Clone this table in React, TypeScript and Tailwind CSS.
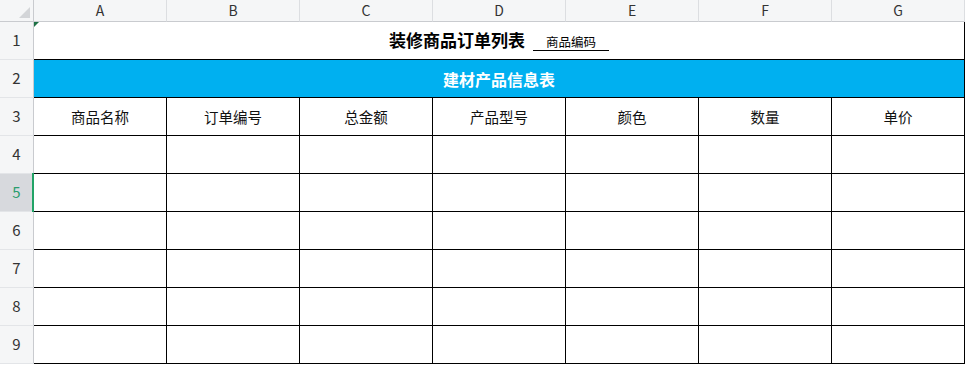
import React from "react";

const cols = ["A", "B", "C", "D", "E", "F", "G"];
const heads = ["商品名称", "订单编号", "总金额", "产品型号", "颜色", "数量", "单价"];
const font = { fontFamily: '"Noto Sans CJK SC", "Noto Sans", sans-serif' };

function RowHead({ n, selected }: { n: number; selected?: boolean }) {
  return (
    <div
      className={
        "relative w-[34px] h-[38px] shrink-0 flex items-center justify-center border-r border-b border-r-[#c9cbcf] border-b-[#e3e5e8] text-[15px] " +
        (selected ? "bg-[#d7d9dd] text-[#2a9d6e]" : "bg-[#f5f6f7] text-[#333]")
      }
    >
      {n}
      {selected && <div className="absolute right-[-1px] top-[-1px] bottom-[-1px] w-[2px] bg-[#21a366]" />}
    </div>
  );
}

export default function App() {
  return (
    <div className="w-[965px] h-[365px] overflow-hidden bg-white" style={font}>
      {/* column header */}
      <div className="flex h-[22px]">
        <div className="relative w-[34px] shrink-0 bg-[#f5f6f7] border-r border-b border-[#c9cbcf]">
          <div className="absolute right-[3px] bottom-[3px] w-0 h-0 border-l-[11px] border-l-transparent border-b-[11px] border-b-[#d3d5d8]" />
        </div>
        {cols.map((c) => (
          <div
            key={c}
            className="w-[133px] shrink-0 bg-[#f5f6f7] border-r border-b border-r-[#dcdee1] border-b-[#c9cbcf] flex items-center justify-center text-[14px] text-[#333]"
          >
            {c}
          </div>
        ))}
      </div>

      {/* row 1 */}
      <div className="flex">
        <RowHead n={1} />
        <div className="relative flex-1 h-[38px] border-r border-b border-black flex items-center justify-center">
          <div className="absolute left-0 top-0 w-0 h-0 border-t-[5px] border-t-[#1e7145] border-r-[5px] border-r-transparent" />
          <span className="text-[17px] font-bold text-black mb-[2px]">装修商品订单列表</span>
          <span className="ml-[8px] mt-[4px] text-[12.5px] text-black border-b border-black px-[13px] leading-[16px]">商品编码</span>
        </div>
      </div>

      {/* row 2 */}
      <div className="flex">
        <RowHead n={2} />
        <div className="flex-1 h-[38px] bg-[#00b0f0] border-r border-b border-black flex items-center justify-center text-white text-[16px] font-bold">
          建材产品信息表
        </div>
      </div>

      {/* row 3 */}
      <div className="flex">
        <RowHead n={3} />
        {heads.map((h) => (
          <div
            key={h}
            className="w-[133px] h-[38px] shrink-0 border-r border-b border-black flex items-center justify-center text-[14.5px] text-[#111]"
          >
            {h}
          </div>
        ))}
      </div>

      {[4, 5, 6, 7, 8, 9].map((n) => (
        <div key={n} className="flex">
          <RowHead n={n} selected={n === 5} />
          {cols.map((c) => (
            <div key={c} className="w-[133px] h-[38px] shrink-0 border-r border-b border-black" />
          ))}
        </div>
      ))}
    </div>
  );
}
